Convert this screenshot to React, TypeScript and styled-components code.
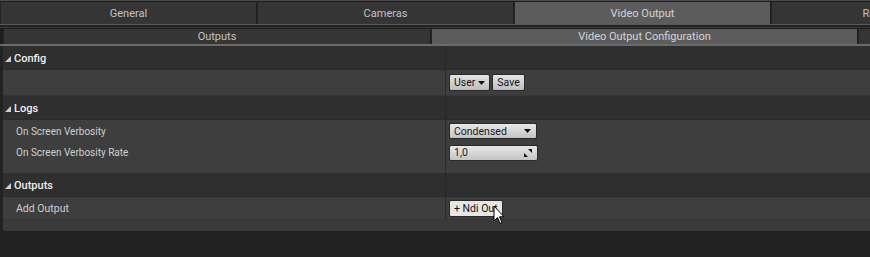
import React from 'react'
import styled, { createGlobalStyle } from 'styled-components'

const Global = createGlobalStyle`
  body {
    margin: 0;
    background: #222222;
    font-family: Roboto, "Liberation Sans", sans-serif;
    overflow: hidden;
  }
`

const Page = styled.div`
  position: relative;
  width: 870px;
  height: 257px;
  overflow: hidden;
  background: #222222;
`

const TopTabs = styled.div`
  display: flex;
  gap: 1px;
  height: 22px;
  padding-top: 1px;
  background: #1d1d1d;
  border-top: 1px solid #4a4a4a;
  border-bottom: 1px solid #5a5a5a;
  width: 1100px;
`

const Tab = styled.div<{ $w: number; $active?: boolean }>`
  flex: 0 0 ${(p) => p.$w}px;
  display: flex;
  align-items: center;
  justify-content: center;
  font-size: 11px;
  color: ${(p) => (p.$active ? '#d4d4d4' : '#c2c2c2')};
  background: ${(p) => (p.$active ? '#5c5c5c' : '#353535')};
  box-sizing: border-box;
  border-left: 1px solid #252525;
`

const SubTabs = styled.div`
  display: flex;
  gap: 1px;
  height: 15px;
  margin-top: 2px;
  padding: 1px 0 0 3px;
  background: #1d1d1d;
  border-top: 1px solid #3a3a3a;
  border-bottom: 2px solid #6a6a6a;
  width: 1100px;
`

const Panel = styled.div`
  margin-left: 3px;
  width: 867px;
  background: #3a3a3a;
  border-bottom-left-radius: 3px;
  padding-bottom: 11px;
`

const HeaderWrap = styled.div`
  display: grid;
  grid-template-columns: 442px 1fr;
  height: 23px;
  background: #2f2f2f;
  border-bottom: 1px solid #2a2a2a;
`

const Header = styled.div`
  display: flex;
  align-items: center;
  gap: 3px;
  padding: 2px 0 0 2px;
  color: #eeeeee;
  font-size: 11px;
  font-weight: 500;
`

const HeaderSide = styled.div`
  border-left: 1px solid #282828;
`

const Row = styled.div<{ $h: number }>`
  display: grid;
  grid-template-columns: 442px 1fr;
  height: ${(p) => p.$h}px;
  background: #3e3e3e;
  border-bottom: 1px solid #363636;
`

const Label = styled.div<{ $size?: number }>`
  display: flex;
  align-items: center;
  padding-left: 13px;
  font-size: ${(p) => p.$size ?? 10.5}px;
  color: #cfcfcf;
`

const Value = styled.div`
  display: flex;
  align-items: center;
  gap: 2px;
  padding-left: 3px;
  border-left: 1px solid #2b2b2b;
`

const Stack = styled.div`
  display: flex;
  flex-direction: column;
  height: 53px;
  background: #3e3e3e;
`

const StackRow = styled.div<{ $h: number }>`
  display: grid;
  grid-template-columns: 442px 1fr;
  height: ${(p) => p.$h}px;
`

const StackFill = styled.div`
  flex: 1;
  display: grid;
  grid-template-columns: 442px 1fr;
`

const Button = styled.div<{ $light?: boolean }>`
  display: flex;
  align-items: center;
  gap: 3px;
  height: 17px;
  padding: 0 4px;
  font-size: 10.5px;
  color: #111;
  background: ${(p) =>
    p.$light ? '#e6e6e6' : 'linear-gradient(#e4e4e4, #bdbdbd)'};
  border: 1px solid #2a2a2a;
  border-radius: 2px;
  box-sizing: border-box;
`

const Combo = styled.div<{ $w: number }>`
  display: flex;
  align-items: center;
  justify-content: space-between;
  width: ${(p) => p.$w}px;
  height: 16px;
  padding: 0 5px 0 4px;
  box-sizing: border-box;
  font-size: 10.5px;
  color: #1a1a1a;
  background: linear-gradient(#e8e8e8, #c4c4c4);
  border: 1px solid #2a2a2a;
  border-radius: 2px;
`

const Caret = () => (
  <svg width="7" height="4" viewBox="0 0 7 4">
    <path d="M0 0H7L3.5 4Z" fill="#111" />
  </svg>
)

const Expand = () => (
  <svg width="6" height="6" viewBox="0 0 6 6">
    <path d="M6 0V6H0Z" fill="#cfcfcf" />
  </svg>
)

const Spin = () => (
  <svg width="8" height="8" viewBox="0 0 8 8">
    <path d="M8 0V4L4 0Z M0 8V4L4 8Z" fill="#111" />
  </svg>
)

const Cursor = styled.svg`
  position: absolute;
  left: 493px;
  top: 205px;
`

export default function App() {
  return (
    <Page>
      <Global />
      <TopTabs>
        <Tab $w={256}>General</Tab>
        <Tab $w={256}>Cameras</Tab>
        <Tab $w={256} $active>Video Output</Tab>
        <Tab $w={256}>Render Targets</Tab>
      </TopTabs>
      <SubTabs>
        <Tab $w={427}>Outputs</Tab>
        <Tab $w={426} $active>Video Output Configuration</Tab>
        <Tab $w={40} />
      </SubTabs>
      <Panel>
        <HeaderWrap>
          <Header><Expand />Config</Header>
          <HeaderSide />
        </HeaderWrap>
        <Row $h={25}>
          <Label />
          <Value>
            <Button>User<Caret /></Button>
            <Button>Save</Button>
          </Value>
        </Row>
        <HeaderWrap>
          <Header><Expand />Logs</Header>
          <HeaderSide />
        </HeaderWrap>
        <Stack>
          <StackRow $h={22}>
            <Label $size={10}>On Screen Verbosity</Label>
            <Value>
              <Combo $w={88}>Condensed<Caret /></Combo>
            </Value>
          </StackRow>
          <StackRow $h={21}>
            <Label $size={10}>On Screen Verbosity Rate</Label>
            <Value>
              <Combo $w={89}>1,0<Spin /></Combo>
            </Value>
          </StackRow>
          <StackFill>
            <div />
            <Value />
          </StackFill>
        </Stack>
        <HeaderWrap>
          <Header><Expand />Outputs</Header>
          <HeaderSide />
        </HeaderWrap>
        <Row $h={22}>
          <Label>Add Output</Label>
          <Value>
            <Button $light>+ Ndi Out</Button>
          </Value>
        </Row>
      </Panel>
      <Cursor width="12" height="20" viewBox="0 0 12 20">
        <path d="M1 1V16L4.5 12.5L7 18.5L9 17.5L6.5 11.8H11Z" fill="#fff" stroke="#000" strokeWidth="1" />
      </Cursor>
    </Page>
  )
}
